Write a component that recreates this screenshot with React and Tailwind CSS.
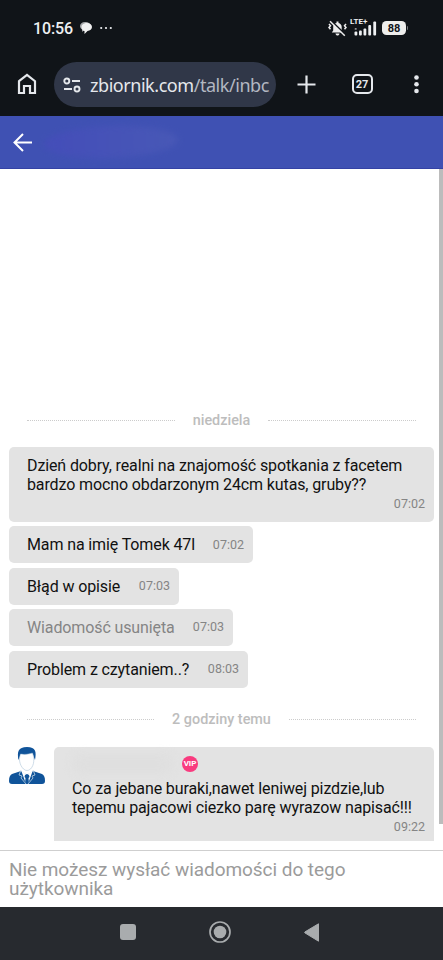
import React from "react";

const messages = [
    { text: "Mam na imię Tomek 47l", time: "07:02", width: "w-[244px]" },
    { text: "Błąd w opisie", time: "07:03", width: "w-[170px]" },
    { text: "Wiadomość usunięta", time: "07:03", width: "w-[224px]", deleted: true },
    { text: "Problem z czytaniem..?", time: "08:03", width: "w-[239px]" },
];

const StatusBar = () => (
    <div className="flex h-14 items-center pl-[33px] pr-[35px] text-[#eef0f2]">
        <span className="pt-[2px] text-[16px] font-medium leading-none tracking-[-0.1px]">10:56</span>
        <svg className="ml-[7px] h-3 w-3" viewBox="0 0 12 12">
            <path d="M5 0C2 0 0 1.800 0 4c0 1.500.8 2.700 2 3.400V10l1.500-1.500H6A5 4 0 0 0 5 0Z" fill="#a6a8aa" />
            <path d="M7 1C4 1 1.500 2.600 1.500 5S3 8.900 4.500 9v3l3-3C10 8.800 12 7.300 12 5S10 1 7 1Z" fill="#f1f1f1" />
        </svg>
        <svg className="ml-2 h-1 w-3" viewBox="0 0 12 4" fill="currentColor">
            <circle cx="1.200" cy="2" r="1.100" />
            <circle cx="6" cy="2" r="1.100" />
            <circle cx="10.800" cy="2" r="1.100" />
        </svg>
        <div className="ml-auto flex items-center">
            <svg className="h-[17px] w-[19px]" viewBox="0 0 19 17" fill="none">
                <path d="M3.800 12.500h11.400l-1.500-2V7c0-2-1.300-3.500-3.200-4V1.500h-2V3C6.300 3.500 5.200 5 5.200 7v3.500Z" fill="#eee" />
                <path d="M7.500 13.500h4c-.5 2.700-3.500 2.700-4 0Z" fill="#eee" />
                <path d="m1 4 1.500 1.800L1 7.500l1.500 1.800M18 4l-1.500 1.800L18 7.500l-1.500 1.800" stroke="#eee" strokeWidth="1.500" />
                <path d="m3.200.8 15 14.500" stroke="#101418" strokeWidth="1.800" />
                <path d="m2 1.200 14.800 14.600" stroke="#eee" strokeWidth="1.500" />
            </svg>
            <div className="relative ml-[3px] h-[17px] w-[27px]">
                <span className="absolute -top-[1.500px] left-0 text-[8px] font-bold leading-[8px]">LTE+</span>
                <svg className="h-full w-full" viewBox="0 0 27 17" fill="currentColor">
                    <rect x="4.500" y="11.500" width="2.800" height="4" rx="1" />
                    <rect x="4.700" y="8" width="2" height="1.800" rx=".5" opacity=".6" />
                    <rect x="9" y="10.500" width="2.800" height="5" rx="1" />
                    <rect x="13.500" y="8.500" width="2.800" height="7" rx="1" />
                    <rect x="18.300" y="5" width="2.800" height="10.500" rx="1" />
                    <rect x="23.300" y="1.500" width="2.800" height="14" rx="1" />
                </svg>
            </div>
            <div className="ml-[5px] flex h-[14px] w-6 items-center justify-center rounded-[4.500px] bg-[#eeeeec] text-[11px] font-bold leading-none text-[#111519]">
                88
            </div>
            <span className="ml-px h-1 w-[1px] rounded-r bg-[#777a7d]" />
        </div>
    </div>
);

const BrowserBar = () => (
    <div className="flex h-[60px] items-start pt-[6px] text-[#e5e8ec]">
        <svg className="ml-[17px] mt-[11px] h-[22px] w-5" viewBox="0 0 20 22" fill="none" stroke="currentColor" strokeWidth="2.200">
            <path d="M2 8.200 10 2l8 6.200V20h-5v-7H7v7H2Z" />
        </svg>
        <div className="ml-[17px] flex h-[45px] w-[222px] items-center rounded-full bg-[#303748] pl-[9px]">
            <svg className="h-4 w-[18px] shrink-0" viewBox="0 0 18 16" fill="none" stroke="currentColor" strokeWidth="1.900">
                <circle cx="3.800" cy="4" r="2.500" />
                <path d="M9 4h8M1 12h8" />
                <circle cx="14" cy="12" r="2.500" />
            </svg>
            <span className="ml-[9px] whitespace-nowrap font-['Noto_Sans',sans-serif] text-[18px] leading-none tracking-[-0.45px]">
                zbiornik.com<span className="text-[#b3b8c2]">/talk/inbc</span>
            </span>
        </div>
        <svg className="ml-[20.500px] mt-[12.500px] h-[19px] w-[19px]" viewBox="0 0 19 19" stroke="currentColor" strokeWidth="2.200">
            <path d="M9.500.5v18M.5 9.500h18" />
        </svg>
        <div className="ml-9 mt-3 flex h-5 w-[21px] items-center justify-center rounded-[5px] border-2 border-current text-[11px] font-bold leading-none">
            27
        </div>
        <svg className="ml-[41px] mt-3 h-5 w-[6px]" viewBox="0 0 6 20" fill="currentColor">
            <circle cx="2.500" cy="3.500" r="2.300" />
            <circle cx="2.500" cy="10.200" r="2.300" />
            <circle cx="2.500" cy="17" r="2.300" />
        </svg>
    </div>
);

const ChatHeader = () => (
    <div className="flex h-[53px] items-center border-b border-[#3442a4] bg-[#3f51b3] pl-[13px]">
        <svg className="h-[19px] w-[19px]" viewBox="0 0 19 19" fill="none" stroke="white" strokeWidth="2">
            <path d="M19 9.500H2M10 1 1.500 9.500 10 18" />
        </svg>
        <div className="ml-3 h-8 w-[134px] -rotate-2 rounded-[50%] bg-linear-to-r from-[#444db9] to-[#4858b6] blur-[3px]" />
    </div>
);

const DateDivider = ({ children }) => (
    <div className="flex h-5 items-center gap-[18px] px-[18px] text-[14.400px] font-medium text-[#bdbdbd]">
        <span className="flex-1 border-t border-dotted border-[#cccccc]" />
        <span className="pt-[2px] leading-none">{children}</span>
        <span className="flex-1 border-t border-dotted border-[#cccccc]" />
    </div>
);

const Avatar = () => (
    <svg className="h-[37px] w-9 shrink-0" viewBox="0 0 36 37">
        <path d="M9.500 13C8 5 9 0 18 0s9.500 5 8 13l-2-5c-4 1-8 0-12-1Z" fill="#10549a" />
        <path d="M11.500 7c4 1 8 0 12-1 2 5 2 12-2 16-2 2-5 2-7 0-4-4-5-10-3-15Z" fill="#fff" stroke="#9db8d0" strokeWidth=".5" />
        <path d="m12 24-9 3c-2 1-3 3-3 7 0 2 1 3 3 3h30c2 0 3-1 3-3 0-4-1-6-3-7l-9-3-6 4Z" fill="#10549a" />
        <path d="m12 23 6 5 6-5-5 14h-2Z" fill="#fff" />
        <path d="m16 28 2-1 2 1 .5 2-1 1 .5 6h-4l.5-6-1-1Z" fill="#10549a" />
        <path d="m12 23-2 5 3 1-1 2 5 6M24 23l2 5-3 1 1 2-5 6" fill="none" stroke="#c3d8e9" strokeWidth=".8" />
    </svg>
);

const Bubble = ({ text, time, width, deleted }) => (
    <div className={`flex h-[37px] items-center justify-between rounded-[5px] bg-[#e3e3e3] pl-[18px] pr-[9px] ${width}`}>
        <span className={`text-[16px] leading-[19px] tracking-[-0.12px] ${deleted ? "text-[#858585]" : "text-[#111]"}`}>{text}</span>
        <span className="text-[12.500px] text-[#858585]">{time}</span>
    </div>
);

export default function App() {
    return (
        <div className="flex h-[960px] w-[443px] flex-col overflow-hidden bg-white font-[Roboto,sans-serif]">
            <div className="h-[116px] shrink-0 bg-[#101418]">
                <StatusBar />
                <BrowserBar />
            </div>
            <ChatHeader />
            <main className="flex h-[681px] shrink-0 justify-between">
                <div className="flex w-[434px] flex-col pl-[9px] pt-[241px]">
                    <DateDivider>niedziela</DateDivider>
                    <div className="mt-[17.400px] flex h-[74.500px] flex-col rounded-[5px] bg-[#e3e3e3] pl-[18px] pr-[9px] pt-[9px]">
                        <p className="whitespace-nowrap text-[16px] leading-[19px] tracking-[-0.12px] text-[#111]">
                            Dzień dobry, realni na znajomość spotkania z facetem<br />
                            bardzo mocno obdarzonym 24cm kutas, gruby??
                        </p>
                        <span className="self-end text-[12.500px] leading-[19px] text-[#858585]">07:02</span>
                    </div>
                    <div className="mt-[4.600px] flex flex-col gap-[4.400px]">
                        {messages.map((message) => (
                            <Bubble key={message.text} {...message} />
                        ))}
                    </div>
                    <div className="mt-[21.500px]">
                        <DateDivider>2 godziny temu</DateDivider>
                    </div>
                    <div className="mt-[17.500px] flex items-start gap-[9px]">
                        <Avatar />
                        <div className="flex h-[94px] flex-1 flex-col rounded-t-[5px] bg-[#e3e3e3] pl-[18px] pr-[9px]">
                            <div className="flex h-[32px] items-center pt-[3px]">
                                <span className="h-5 w-[102px] rounded-full bg-[#dfdfdf] blur-[4px]" />
                                <span className="ml-2 flex h-4 w-4 items-center justify-center rounded-full bg-[#f93b7f] text-[8px] font-bold leading-none text-white">
                                    VIP
                                </span>
                            </div>
                            <p className="whitespace-nowrap text-[16px] leading-[19px] tracking-[-0.12px] text-[#111]">
                                Co za jebane buraki,nawet leniwej pizdzie,lub<br />
                                tepemu pajacowi ciezko parę wyrazow napisać!!!
                            </p>
                            <span className="self-end text-[12.500px] leading-[19px] text-[#858585]">09:22</span>
                        </div>
                    </div>
                </div>
                <div className="h-[655px] w-1 bg-[#bcbcbc]" />
            </main>
            <footer className="h-[57px] shrink-0 border-t border-[#cfcfcf] pl-[9px] pt-[9px] text-[19px] leading-[19px] tracking-[-0.05px] text-[#9b9b9b]">
                Nie możesz wysłać wiadomości do tego<br />użytkownika
            </footer>
            <nav className="flex h-[53px] shrink-0 items-center bg-[#272a2f] pb-[3px] pl-[120px]">
                <div className="h-4 w-4 rounded-[3px] bg-[#a9acae]" />
                <svg className="ml-[73px] h-[22px] w-[22px]" viewBox="0 0 22 22" fill="none">
                    <circle cx="11" cy="11" r="10" stroke="#a9acae" strokeWidth="1.700" />
                    <circle cx="11" cy="11" r="6.300" fill="#a9acae" />
                </svg>
                <svg className="ml-[73px] h-[19px] w-[15px]" viewBox="0 0 15 19">
                    <path d="M14.500.8v17.400L.8 9.800V9Z" fill="#a9acae" stroke="#a9acae" strokeLinejoin="round" />
                </svg>
            </nav>
        </div>
    );
}
